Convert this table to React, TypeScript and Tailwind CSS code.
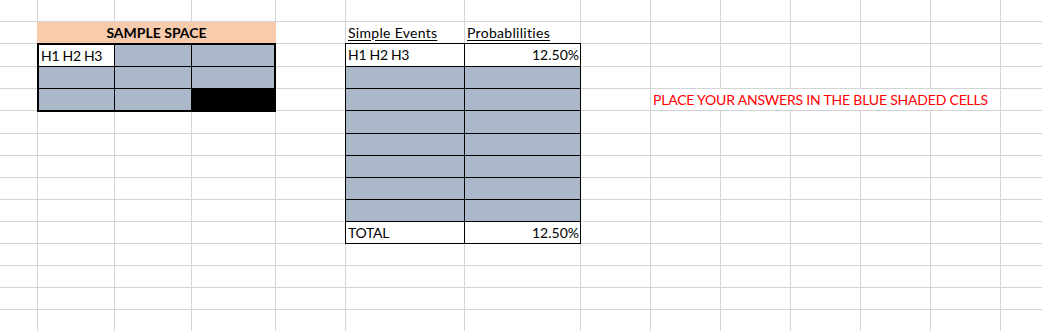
import React from "react";

// Worksheet geometry: 14 columns, 15 rows (sizes include the 1px gridline on the right/bottom)
const COLS = 14;
const ROWS = 15;

type Block = { r: number; c: number; rs: number; cs: number; node: React.ReactNode };

const BLUE = "bg-[#acb9ca]";

function SampleSpace() {
  const fills = ["bg-white", BLUE, BLUE, BLUE, BLUE, BLUE, BLUE, BLUE, "bg-black"];
  return (
    <div className="relative col-span-3 row-span-3 -ml-px -mt-px -mb-px border-2 border-black grid grid-cols-[76px_77px_82px] grid-rows-[22px_22px_21px]">
      {fills.map((fill, i) => {
        const row = Math.floor(i / 3);
        const col = i % 3;
        return (
          <div
            key={i}
            className={[
              "flex items-center pl-[2px] pt-px border-black tracking-[-0.3px]",
              fill,
              col < 2 ? "border-r" : "",
              row < 2 ? "border-b" : "",
            ].join(" ")}
          >
            {i === 0 ? "H1 H2 H3" : null}
          </div>
        );
      })}
    </div>
  );
}

function EventsTable() {
  const rows: { event: string; prob: string; blank: boolean }[] = [
    { event: "H1 H2 H3", prob: "12.50%", blank: false },
    ...Array.from({ length: 7 }, () => ({ event: "", prob: "", blank: true })),
    { event: "TOTAL", prob: "12.50%", blank: false },
  ];
  return (
    <div className="relative col-span-2 row-span-9 -ml-px -mt-px border-l border-t border-black grid grid-cols-[119px_116px] grid-rows-[23px_22px_22px_23px_22px_22px_22px_22px_22px]">
      {rows.map((row, i) => (
        <React.Fragment key={i}>
          <div
            className={[
              "flex items-center pl-[2px] border-r border-b border-black tracking-[-0.3px]",
              row.blank ? BLUE : "bg-white",
            ].join(" ")}
          >
            {row.event}
          </div>
          <div
            className={[
              "flex items-center justify-end pr-px border-r border-b border-black",
              row.blank ? BLUE : "bg-white",
            ].join(" ")}
          >
            {row.prob}
          </div>
        </React.Fragment>
      ))}
    </div>
  );
}

const blocks: Block[] = [
  {
    r: 2,
    c: 2,
    rs: 1,
    cs: 3,
    node: (
      <div className="col-span-3 -ml-px bg-[#f8cbad] flex items-center justify-center font-bold">
        SAMPLE SPACE
      </div>
    ),
  },
  { r: 3, c: 2, rs: 3, cs: 3, node: <SampleSpace /> },
  { r: 3, c: 6, rs: 9, cs: 2, node: <EventsTable /> },
  {
    r: 5,
    c: 9,
    rs: 1,
    cs: 5,
    node: (
      <div className="col-span-5 border-r border-b border-[#d4d4d4] flex items-center pl-[2px] text-[#ff0000] whitespace-nowrap tracking-[-0.2px]">
        PLACE YOUR ANSWERS IN THE BLUE SHADED CELLS
      </div>
    ),
  },
];

const labels: Record<string, string> = {
  "2-6": "Simple Events",
  "2-7": "Probablilities",
};

function Sheet() {
  const items: React.ReactNode[] = [];
  for (let r = 1; r <= ROWS; r++) {
    for (let c = 1; c <= COLS; c++) {
      const anchor = blocks.find((b) => b.r === r && b.c === c);
      if (anchor) {
        items.push(<React.Fragment key={`${r}-${c}`}>{anchor.node}</React.Fragment>);
        continue;
      }
      const covered = blocks.some(
        (b) => r >= b.r && r < b.r + b.rs && c >= b.c && c < b.c + b.cs
      );
      if (covered) continue;
      const label = labels[`${r}-${c}`];
      items.push(
        <div
          key={`${r}-${c}`}
          className="flex items-center pl-[2px] border-r border-b border-[#d4d4d4] whitespace-nowrap"
        >
          {label ? (
            <span className="underline underline-offset-2 tracking-[0.3px]">{label}</span>
          ) : null}
        </div>
      );
    }
  }
  return (
    <div className="grid w-max grid-cols-[38px_77px_77px_84px_70px_119px_116px_70px_70px_70px_70px_70px_70px_70px] grid-rows-[22px_22px_23px_22px_22px_23px_22px_22px_22px_22px_22px_22px_22px_22px_22px]">
      {items}
    </div>
  );
}

export default function App() {
  return (
    <div className="w-[1042px] h-[331px] overflow-hidden bg-white text-black text-[14px] leading-none font-[Lato,sans-serif]">
      <Sheet />
    </div>
  );
}
